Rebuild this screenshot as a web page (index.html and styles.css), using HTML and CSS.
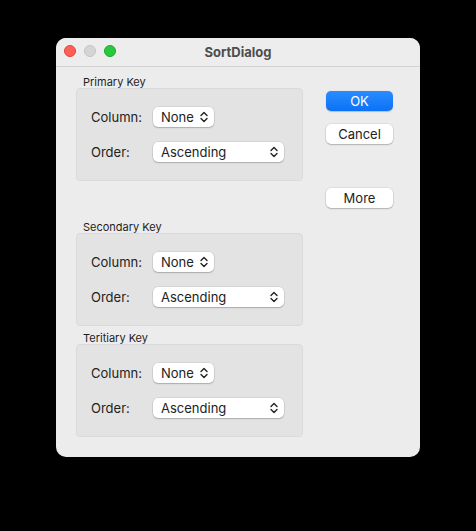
FILE: index.html
```html
<!DOCTYPE html>
<html>
<head>
<meta charset="utf-8">
<link rel="stylesheet" href="styles.css">
</head>
<body>
<div class="window">
  <div class="titlebar">
    <div class="lights">
      <span class="light red"></span>
      <span class="light gray"></span>
      <span class="light green"></span>
    </div>
    <div class="title">SortDialog</div>
  </div>
  <div class="content">
    <div class="groups">
      <div class="group">
        <div class="group-label">Primary Key</div>
        <div class="box">
          <div class="row"><span class="lbl">Column:</span><div class="popup short"><span>None</span><svg class="chev" viewBox="0 0 8 12" width="8" height="12"><path d="M1 4.5 L4 1.5 L7 4.5 M1 7.5 L4 10.5 L7 7.5" fill="none" stroke="#222" stroke-width="1.4" stroke-linecap="round" stroke-linejoin="round"/></svg></div></div>
          <div class="row"><span class="lbl">Order:</span><div class="popup long"><span>Ascending</span><svg class="chev" viewBox="0 0 8 12" width="8" height="12"><path d="M1 4.5 L4 1.5 L7 4.5 M1 7.5 L4 10.5 L7 7.5" fill="none" stroke="#222" stroke-width="1.4" stroke-linecap="round" stroke-linejoin="round"/></svg></div></div>
        </div>
      </div>
      <div class="group second">
        <div class="group-label">Secondary Key</div>
        <div class="box">
          <div class="row"><span class="lbl">Column:</span><div class="popup short"><span>None</span><svg class="chev" viewBox="0 0 8 12" width="8" height="12"><path d="M1 4.5 L4 1.5 L7 4.5 M1 7.5 L4 10.5 L7 7.5" fill="none" stroke="#222" stroke-width="1.4" stroke-linecap="round" stroke-linejoin="round"/></svg></div></div>
          <div class="row"><span class="lbl">Order:</span><div class="popup long"><span>Ascending</span><svg class="chev" viewBox="0 0 8 12" width="8" height="12"><path d="M1 4.5 L4 1.5 L7 4.5 M1 7.5 L4 10.5 L7 7.5" fill="none" stroke="#222" stroke-width="1.4" stroke-linecap="round" stroke-linejoin="round"/></svg></div></div>
        </div>
      </div>
      <div class="group third">
        <div class="group-label">Teritiary Key</div>
        <div class="box">
          <div class="row"><span class="lbl">Column:</span><div class="popup short"><span>None</span><svg class="chev" viewBox="0 0 8 12" width="8" height="12"><path d="M1 4.5 L4 1.5 L7 4.5 M1 7.5 L4 10.5 L7 7.5" fill="none" stroke="#222" stroke-width="1.4" stroke-linecap="round" stroke-linejoin="round"/></svg></div></div>
          <div class="row"><span class="lbl">Order:</span><div class="popup long"><span>Ascending</span><svg class="chev" viewBox="0 0 8 12" width="8" height="12"><path d="M1 4.5 L4 1.5 L7 4.5 M1 7.5 L4 10.5 L7 7.5" fill="none" stroke="#222" stroke-width="1.4" stroke-linecap="round" stroke-linejoin="round"/></svg></div></div>
        </div>
      </div>
    </div>
    <div class="buttons">
      <button class="btn primary">OK</button>
      <button class="btn cancel">Cancel</button>
      <button class="btn more">More</button>
    </div>
  </div>
</div>
</body>
</html>
```
FILE: styles.css
```css
* { box-sizing: border-box; }
html, body { margin: 0; padding: 0; }
body {
  background: #000;
  width: 476px;
  height: 531px;
  padding: 38px 0 0 56px;
  font-family: Inter, "Liberation Sans", sans-serif;
  color: #222;
}
.window {
  width: 364px;
  height: 419px;
  background: #ececec;
  border-radius: 10px;
  overflow: hidden;
}
.titlebar {
  height: 29px;
  border-bottom: 1px solid #d3d3d3;
  background: #ededed;
  display: flex;
  align-items: center;
  position: relative;
}
.lights {
  display: flex;
  gap: 8px;
  padding-left: 8px;
  margin-top: -2px;
}
.light {
  width: 12px;
  height: 12px;
  border-radius: 50%;
  display: block;
}
.light.red { background: #fe5f57; border: 0.5px solid #e0443e; }
.light.gray { background: #d5d5d5; border: 0.5px solid #c4c4c4; }
.light.green { background: #28c840; border: 0.5px solid #1aab29; }
.title {
  position: absolute;
  left: 0;
  right: 0;
  top: 6px;
  text-align: center;
  font-weight: 700;
  font-size: 13px;
  color: #4d4d4d;
  pointer-events: none;
}
.content {
  display: flex;
  padding-left: 20px;
}
.groups {
  width: 227px;
  padding-top: 9px;
  display: flex;
  flex-direction: column;
}
.group.second { margin-top: 40px; }
.group.third { margin-top: 6px; }
.group-label {
  font-size: 11px;
  line-height: 12px;
  height: 12px;
  padding-left: 7px;
  color: #1e1e1e;
}
.box {
  background: #e3e3e3;
  border: 1px solid #dadada;
  border-radius: 4px;
  height: 93px;
  padding: 18px 0 0 14px;
  display: flex;
  flex-direction: column;
  gap: 15px;
}
.row {
  display: flex;
  align-items: center;
  height: 20px;
}
.lbl {
  width: 62px;
  font-size: 13px;
  color: #222;
}
.popup {
  height: 20px;
  background: #fff;
  border-radius: 5px;
  box-shadow: 0 0 0 0.5px rgba(0,0,0,0.12), 0 1px 1.5px rgba(0,0,0,0.2);
  display: flex;
  align-items: center;
  justify-content: space-between;
  padding: 0 6px 0 8px;
  font-size: 13px;
  color: #222;
}
.popup.short { width: 61px; }
.popup.long { width: 131px; }
.chev { display: block; }
.buttons {
  margin-left: 23px;
  padding-top: 24px;
  display: flex;
  flex-direction: column;
}
.btn {
  width: 67px;
  height: 20px;
  border: none;
  border-radius: 5px;
  font-family: Inter, "Liberation Sans", sans-serif;
  font-size: 13px;
  padding: 0;
  background: #fff;
  color: #222;
  box-shadow: 0 0 0 0.5px rgba(0,0,0,0.12), 0 1px 1.5px rgba(0,0,0,0.2);
}
.btn.primary {
  background: linear-gradient(#2a8cff, #0b72f5);
  color: #fff;
  box-shadow: 0 0.5px 1px rgba(0,0,0,0.2);
}
.btn.cancel { margin-top: 13px; }
.btn.more { margin-top: 44px; }
```
